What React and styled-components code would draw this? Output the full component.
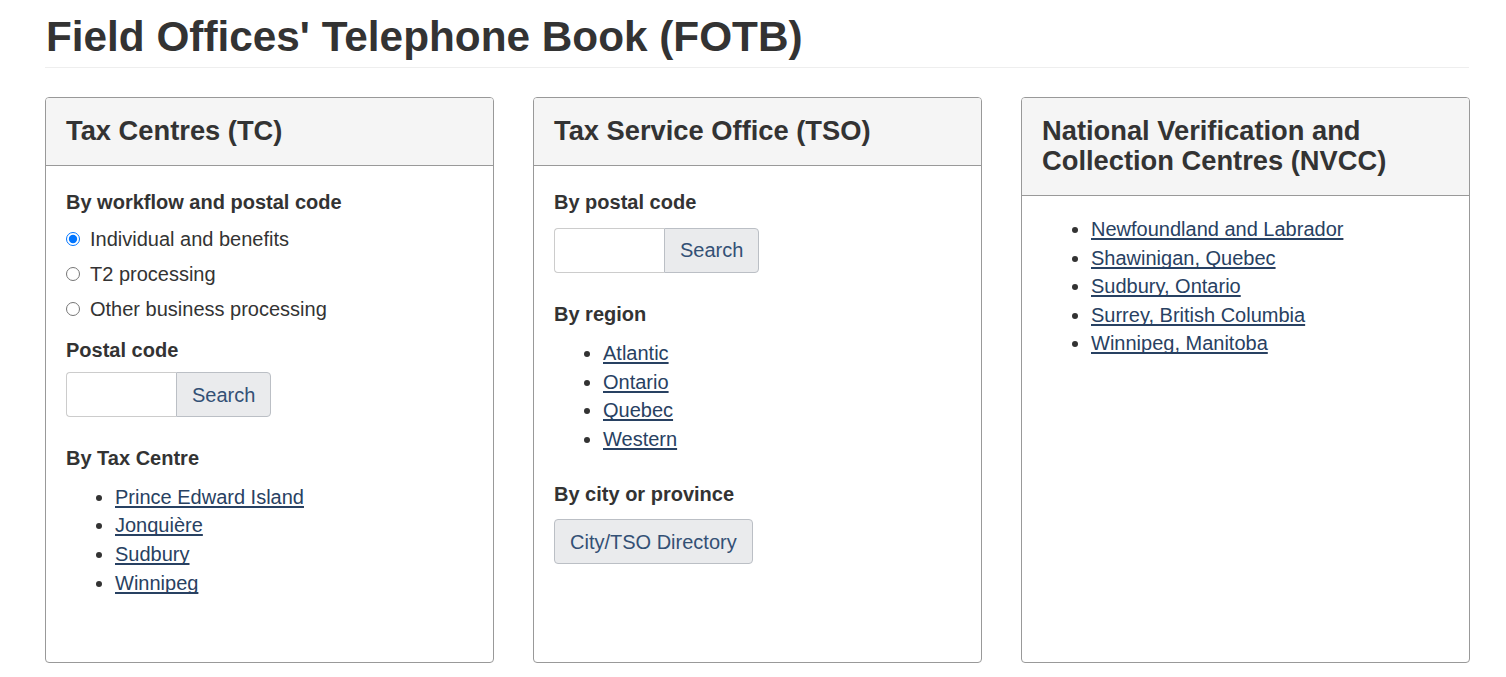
import React from "react";
import styled, { createGlobalStyle } from "styled-components";

const Global = createGlobalStyle`
  html, body { margin: 0; padding: 0; background: #fff; }
  body {
    font-family: "Liberation Sans", Arial, Helvetica, sans-serif;
    color: #333;
    font-size: 20px;
    line-height: 1.43;
  }
  * { box-sizing: border-box; }
`;

const Page = styled.main`
  padding: 0 36px 0 45px;
`;

const Title = styled.h1`
  margin: 14px 1px 29px 0;
  padding-bottom: 7px;
  padding-left: 1px;
  font-size: 42.3px;
  line-height: 46px;
  font-weight: 700;
  color: #333;
  border-bottom: 1px solid #eee;
`;

const Columns = styled.div`
  display: grid;
  grid-template-columns: repeat(3, 1fr);
  column-gap: 39px;
`;

const Panel = styled.section`
  border: 1px solid #999;
  border-radius: 4px;
  min-height: 566px;
  display: flex;
  flex-direction: column;
  overflow: hidden;
`;

const PanelHeader = styled.header`
  background: #f5f5f5;
  border-bottom: 1px solid #999;
  padding: 18px 19px 19px 20px;
`;

const PanelTitle = styled.h2`
  margin: 0;
  font-size: 27.3px;
  line-height: 30px;
  font-weight: 700;
  color: #333;
`;

const PanelBody = styled.div`
  padding: 19px 19px 19px 20px;
`;

const Block = styled.div`
  margin-top: ${(p) => p.$top ?? 0}px;
`;

const Label = styled.h3`
  margin: ${(p) => p.$mt ?? 0}px 0 ${(p) => p.$mb ?? 0}px;
  font-size: 20px;
  line-height: 28.6px;
  font-weight: 700;
  color: #333;
`;

const RadioRow = styled.label`
  display: flex;
  align-items: center;
  height: 35px;
  line-height: 35px;
  font-size: 20px;
  color: #333;
  cursor: pointer;

  input {
    width: 14px;
    height: 14px;
    margin: 0 10px 0 0;
    accent-color: #0075ff;
  }
`;

const SearchGroup = styled.div`
  display: flex;
  height: 45px;
  margin-top: ${(p) => p.$mt ?? 0}px;
`;

const TextInput = styled.input`
  width: 110px;
  height: 45px;
  border: 1px solid #ccc;
  border-right: none;
  border-radius: 4px 0 0 4px;
  padding: 6px 10px;
  font: inherit;
  outline: none;
`;

const Button = styled.button`
  height: 45px;
  padding: 0 15px;
  background: #eaebed;
  border: 1px solid #bbbfc5;
  border-radius: ${(p) => (p.$joined ? "0 4px 4px 0" : "4px")};
  color: #335075;
  font-family: "Liberation Sans", Arial, Helvetica, sans-serif;
  font-size: 20px;
  line-height: 1;
  cursor: pointer;
`;

const LinkList = styled.ul`
  margin: ${(p) => p.$mt ?? 0}px 0 0;
  padding: 0 0 0 49px;
  list-style: disc;

  li {
    line-height: 28.6px;
    font-size: 20px;
  }

  a {
    color: #284162;
    text-decoration: underline;
    text-decoration-thickness: 1.5px;
    text-underline-offset: 2px;
    text-decoration-skip-ink: none;
  }
`;

const tcLinks = ["Prince Edward Island", "Jonquière", "Sudbury", "Winnipeg"];
const regions = ["Atlantic", "Ontario", "Quebec", "Western"];
const nvcc = [
  "Newfoundland and Labrador",
  "Shawinigan, Quebec",
  "Sudbury, Ontario",
  "Surrey, British Columbia",
  "Winnipeg, Manitoba",
];

export default function App() {
  return (
    <>
      <Global />
      <Page>
        <Title>Field Offices' Telephone Book (FOTB)</Title>
        <Columns>
          <Panel>
            <PanelHeader>
              <PanelTitle>Tax Centres (TC)</PanelTitle>
            </PanelHeader>
            <PanelBody>
              <Label $mt={3} $mb={5}>By workflow and postal code</Label>
              <RadioRow>
                <input type="radio" name="wf" defaultChecked />
                Individual and benefits
              </RadioRow>
              <RadioRow>
                <input type="radio" name="wf" />
                T2 processing
              </RadioRow>
              <RadioRow>
                <input type="radio" name="wf" />
                Other business processing
              </RadioRow>
              <Label $mt={9}>Postal code</Label>
              <SearchGroup $mt={8}>
                <TextInput type="text" aria-label="Postal code" />
                <Button $joined>Search</Button>
              </SearchGroup>
              <Label $mt={27}>By Tax Centre</Label>
              <LinkList $mt={10}>
                {tcLinks.map((l) => (
                  <li key={l}>
                    <a href="#">{l}</a>
                  </li>
                ))}
              </LinkList>
            </PanelBody>
          </Panel>

          <Panel>
            <PanelHeader>
              <PanelTitle>Tax Service Office (TSO)</PanelTitle>
            </PanelHeader>
            <PanelBody>
              <Label $mt={3}>By postal code</Label>
              <SearchGroup $mt={11}>
                <TextInput type="text" aria-label="Postal code" />
                <Button $joined>Search</Button>
              </SearchGroup>
              <Label $mt={27}>By region</Label>
              <LinkList $mt={11}>
                {regions.map((l) => (
                  <li key={l}>
                    <a href="#">{l}</a>
                  </li>
                ))}
              </LinkList>
              <Label $mt={26}>By city or province</Label>
              <Block $top={11}>
                <Button>City/TSO Directory</Button>
              </Block>
            </PanelBody>
          </Panel>

          <Panel>
            <PanelHeader>
              <PanelTitle>
                National Verification and
                <br />
                Collection Centres (NVCC)
              </PanelTitle>
            </PanelHeader>
            <PanelBody>
              <LinkList>
                {nvcc.map((l) => (
                  <li key={l}>
                    <a href="#">{l}</a>
                  </li>
                ))}
              </LinkList>
            </PanelBody>
          </Panel>
        </Columns>
      </Page>
    </>
  );
}
